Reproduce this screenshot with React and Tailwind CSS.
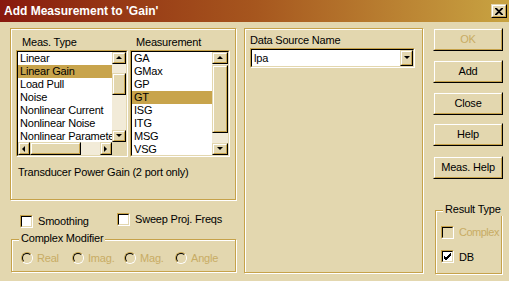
import React from 'react'

const BG = 'bg-[#e3d7af]'

function Sunken({ className = '', inner = '', children }) {
  return (
    <div className={`border border-t-[#c6a24a] border-l-[#c6a24a] border-b-white border-r-white ${className}`}>
      <div className={`w-full h-full border border-t-black border-l-black border-b-[#e3d7af] border-r-[#e3d7af] ${inner}`}>
        {children}
      </div>
    </div>
  )
}

function Raised({ className = '', children }) {
  return (
    <div className={`border border-t-[#e3d7af] border-l-[#e3d7af] border-b-black border-r-black ${className}`}>
      <div className="w-full h-full border border-t-white border-l-white border-b-[#c6a24a] border-r-[#c6a24a] bg-[#e3d7af] flex items-center justify-center">
        {children}
      </div>
    </div>
  )
}

function Arrow({ dir }) {
  const pts = {
    up: '1,5 4,2 7,5',
    down: '1,2 4,5 7,2',
    left: '5,1 2,4 5,7',
    right: '2,1 5,4 2,7',
  }[dir]
  return (
    <svg width="8" height="8" viewBox="0 0 8 8">
      <polygon points={pts} fill="#000" />
    </svg>
  )
}

function Group({ className = '', label, labelClass = '', children }) {
  return (
    <div className={`relative border border-[#c6a24a] shadow-[inset_1px_1px_0_#fff,1px_1px_0_#fff] ${className}`}>
      {label && (
        <span className={`absolute -top-[8px] px-[2px] ${BG} leading-[13px] whitespace-nowrap ${labelClass}`}>{label}</span>
      )}
      {children}
    </div>
  )
}

function Item({ text, sel }) {
  return (
    <div className={`h-[13px] leading-[13px] pl-[2px] whitespace-nowrap overflow-hidden ${sel ? 'bg-[#c8a44c]' : ''}`}>
      {text}
    </div>
  )
}

function Check({ checked, disabled, label }) {
  return (
    <div className="flex items-center gap-[5px] whitespace-nowrap">
      <Sunken className="w-[13px] h-[13px] shrink-0" inner={disabled ? BG : 'bg-white'}>
        {checked && (
          <svg width="9" height="9" viewBox="0 0 9 9" className="block">
            <path d="M1 4 L3 6 L8 1 M1 5 L3 7 L8 2 M1 6 L3 8 L8 3" stroke="#000" strokeWidth="1" fill="none" />
          </svg>
        )}
      </Sunken>
      <span className={disabled ? 'text-[#c8ac64] tracking-[-0.5px]' : ''}>{label}</span>
    </div>
  )
}

function Radio({ label }) {
  return (
    <div className="flex items-center gap-[4px] text-[#c8ac64]">
      <div className="w-[12px] h-[12px] rounded-full border border-t-[#c6a24a] border-l-[#c6a24a] border-b-white border-r-white">
        <div className="w-full h-full rounded-full border border-t-black border-l-black border-b-[#e3d7af] border-r-[#e3d7af]" />
      </div>
      <span>{label}</span>
    </div>
  )
}

export default function App() {
  const types = ['Linear', 'Linear Gain', 'Load Pull', 'Noise', 'Nonlinear Current', 'Nonlinear Noise', 'Nonlinear Paramete']
  const meas = ['GA', 'GMax', 'GP', 'GT', 'ISG', 'ITG', 'MSG', 'VSG']

  return (
    <div className={`w-[509px] h-[281px] ${BG} overflow-hidden flex flex-col text-[11px] tracking-[-0.2px] text-black font-['Liberation_Sans',Arial,sans-serif]`}>
      {/* Title bar */}
      <div className="h-[22px] flex items-center justify-between pl-[4px] pr-[2px] bg-gradient-to-r from-[#88180e] via-[#a6561e] to-[#c8a442]">
        <span className="text-white font-bold text-[12px] tracking-[0px]">Add Measurement to 'Gain'</span>
        <Raised className="w-[16px] h-[14px]">
          <svg width="8" height="7" viewBox="0 0 8 7">
            <path d="M0 0 L7 7 M1 0 L8 7 M7 0 L0 7 M8 0 L1 7" stroke="#000" strokeWidth="1.2" />
          </svg>
        </Raised>
      </div>

      <div className="flex pl-[10px] pt-[6px]">
        {/* Left column */}
        <div className="w-[226px] flex flex-col">
          <Group className="h-[172px] pl-[5px] pt-[5px]">
            <div className="flex h-[16px]">
              <span className="w-[114px] pl-[6px]">Meas. Type</span>
              <span className="pl-[6px]">Measurement</span>
            </div>
            <div className="flex gap-[2px]">
              <Sunken className="w-[112px] h-[107px]" inner="bg-white flex flex-col">
                <div className="flex flex-1 min-h-0">
                  <div className="flex-1 overflow-hidden">
                    {types.map((t) => (
                      <Item key={t} text={t} sel={t === 'Linear Gain'} />
                    ))}
                  </div>
                  <div className="w-[14px] bg-[#f2ebd8] flex flex-col">
                    <Raised className="w-[14px] h-[12px] shrink-0"><Arrow dir="up" /></Raised>
                    <div className="h-[9px]" />
                    <Raised className="w-[14px] h-[22px] shrink-0" />
                    <div className="flex-1" />
                    <Raised className="w-[14px] h-[12px] shrink-0"><Arrow dir="down" /></Raised>
                  </div>
                </div>
                <div className="h-[13px] flex bg-[#f2ebd8]">
                  <Raised className="w-[12px] h-[13px] shrink-0"><Arrow dir="left" /></Raised>
                  <Raised className="w-[51px] h-[13px] shrink-0" />
                  <div className="flex-1" />
                  <Raised className="w-[12px] h-[13px] shrink-0"><Arrow dir="right" /></Raised>
                  <div className={`w-[14px] ${BG}`} />
                </div>
              </Sunken>
              <Sunken className="w-[100px] h-[107px]" inner="bg-white flex">
                <div className="flex-1 overflow-hidden">
                  {meas.map((m) => (
                    <Item key={m} text={m} sel={m === 'GT'} />
                  ))}
                </div>
                <div className="w-[16px] bg-[#f2ebd8] flex flex-col">
                  <Raised className="w-[16px] h-[12px] shrink-0"><Arrow dir="up" /></Raised>
                  <Raised className="w-[16px] h-[68px] shrink-0 mt-[1px]" />
                  <div className="flex-1" />
                  <Raised className="w-[16px] h-[12px] shrink-0"><Arrow dir="down" /></Raised>
                </div>
              </Sunken>
            </div>
            <div className="mt-[7px] pl-[2px]">Transducer Power Gain (2 port only)</div>
          </Group>

          <div className="flex mt-[13px] pl-[10px] h-[13px]">
            <div className="w-[97px]"><Check label="Smoothing" /></div>
            <Check label="Sweep Proj. Freqs" />
          </div>

          <Group className="mt-[13px] h-[33px] ml-[1px] flex items-end pb-[5px] pl-[9px]" label="Complex Modifier" labelClass="left-[7px]">
            <div className="w-[51px]"><Radio label="Real" /></div>
            <div className="w-[52px]"><Radio label="Imag." /></div>
            <div className="w-[51px]"><Radio label="Mag." /></div>
            <Radio label="Angle" />
          </Group>
        </div>

        {/* Middle group */}
        <Group className="ml-[8px] w-[179px] h-[245px] pl-[5px] pt-[5px]">
          <div className="h-[14px] leading-[13px]">Data Source Name</div>
          <Sunken className="w-[165px] h-[20px]" inner="bg-white flex items-center">
            <span className="flex-1 pl-[2px]">lpa</span>
            <Raised className="w-[13px] h-[16px]"><Arrow dir="down" /></Raised>
          </Sunken>
        </Group>

        {/* Buttons column */}
        <div className="ml-[10px] w-[70px] flex flex-col">
          <Raised className="h-[23px]"><span className="text-[#c8ac64]">OK</span></Raised>
          <Raised className="h-[23px] mt-[9px]">Add</Raised>
          <Raised className="h-[23px] mt-[9px]">Close</Raised>
          <Raised className="h-[23px] mt-[8px]">Help</Raised>
          <Raised className="h-[23px] mt-[10px]">Meas. Help</Raised>
          <Group className="mt-[31px] ml-[2px] w-[67px] h-[64px] flex flex-col pl-[5px] pt-[13px] gap-[8px]" label="Result Type" labelClass="left-[7px]">
            <Check label="Complex" disabled />
            <Check label="DB" checked />
          </Group>
        </div>
      </div>
    </div>
  )
}
